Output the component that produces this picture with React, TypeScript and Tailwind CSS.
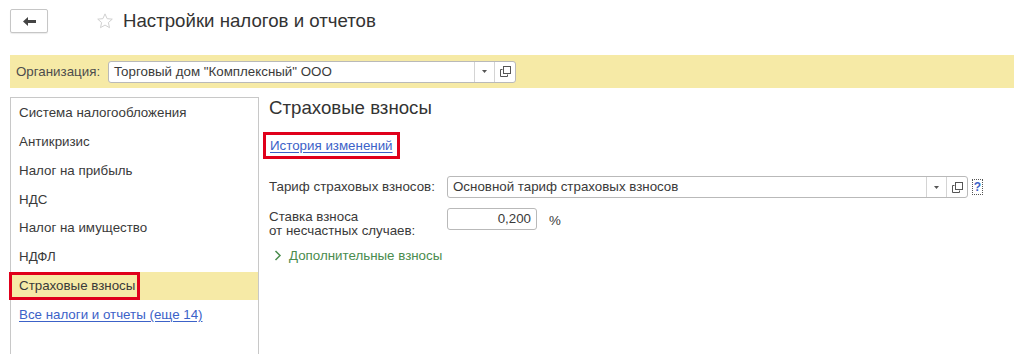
import React from 'react';

const menuItems = [
   'Система налогообложения',
   'Антикризис',
   'Налог на прибыль',
   'НДС',
   'Налог на имущество',
   'НДФЛ',
];

// Small "open" icon used on the right of select fields
const OpenIcon = () => (
   <svg width="11" height="11" viewBox="0 0 11 11" fill="none">
      <rect x="3.5" y="0.5" width="7" height="7" fill="white" stroke="#555" strokeWidth="1" />
      <path d="M0.5 3.5 V10.5 H7.5 V8.5 M0.5 3.5 H2.5" stroke="#555" strokeWidth="1" />
   </svg>
);

const SelectField: React.FC<{ value: string; className: string }> = ({ value, className }) => (
   <div className={`flex h-[22px] items-stretch rounded-[3px] border border-[#b9b9b9] bg-white ${className}`}>
      <div className="flex flex-1 items-center pl-[5px] text-[13.33px] text-[#3a3a3a]">{value}</div>
      <div className="flex w-[20px] items-center justify-center border-l border-[#d4d4d4]">
         <svg width="5" height="3" viewBox="0 0 5 3">
            <path d="M0 0 H5 L2.5 3 Z" fill="#555" />
         </svg>
      </div>
      <div className="flex w-[21px] items-center justify-center border-l border-[#d4d4d4]">
         <OpenIcon />
      </div>
   </div>
);

export default function App() {
   return (
      <div className="relative h-[354px] w-[1024px] overflow-hidden bg-white font-['Liberation_Sans',Arial,sans-serif] text-[#3a3a3a]">
         {/* Header */}
         <div className="flex h-[43px] items-start pl-[10px] pt-[9px]">
            <button className="flex h-[24px] w-[38px] items-center justify-center rounded-[2px] border border-[#c6c6c6] bg-white shadow-[0_1px_1px_rgba(0,0,0,0.08)]">
               <svg width="13" height="9" viewBox="0 0 13 9">
                  <path d="M0 4.5 L5 0 V3 H13 V6 H5 V9 Z" fill="#444" />
               </svg>
            </button>
            <svg className="ml-[48px] mt-[3px]" width="18" height="18" viewBox="0 0 24 24" fill="none">
               <path
                  d="M12 2.5 L14.8 8.9 L21.7 9.5 L16.5 14.1 L18 20.9 L12 17.4 L6 20.9 L7.5 14.1 L2.3 9.5 L9.2 8.9 Z"
                  stroke="#cfcfcf"
                  strokeWidth="1.3"
                  strokeLinejoin="round"
               />
            </svg>
            <h1 className="ml-[9px] text-[18.67px] leading-[24px] text-[#333]">Настройки налогов и отчетов</h1>
         </div>

         {/* Organization bar */}
         <div className="mx-[10px] mt-[12px] flex h-[33px] items-center bg-[#f6eaa6] pl-[6px]">
            <span className="w-[92px] text-[13.33px] text-[#4d4d4d]">Организация:</span>
            <SelectField value={'Торговый дом "Комплексный" ООО'} className="w-[408px]" />
         </div>

         {/* Main */}
         <div className="mt-[9px] flex">
            <div className="ml-[10px] h-[300px] w-[249px] border border-[#c8c8c8] pt-px">
               {menuItems.map((item) => (
                  <div key={item} className="flex h-[28.75px] items-center pl-[8px] text-[13.33px]">
                     {item}
                  </div>
               ))}
               <div className="relative flex h-[28.75px] items-center bg-[#f6eaa6] pl-[8px] text-[13.33px]">
                  Страховые взносы
                  <div className="absolute left-[-2px] top-0 h-[28px] w-[131px] border-[3px] border-[#e0001b]" />
               </div>
               <div className="flex h-[28.75px] items-center pl-[8px] text-[13.33px]">
                  <a className="text-[#3c62c8] underline underline-offset-2">Все налоги и отчеты (еще 14)</a>
               </div>
            </div>

            <div className="ml-[10px] flex-1">
               <h2 className="text-[18.67px] leading-[22px] text-[#333]">Страховые взносы</h2>
               <div className="ml-[-6px] mt-[13px] inline-block border-[3px] border-[#e0001b] px-[4px] text-[13.33px] leading-[21px]">
                  <a className="text-[#3c62c8] underline underline-offset-2">История изменений</a>
               </div>

               <div className="mt-[17px] flex items-center">
                  <span className="w-[178px] text-[13.33px]">Тариф страховых взносов:</span>
                  <SelectField value="Основной тариф страховых взносов" className="w-[521px]" />
                  <span className="ml-[4px] flex h-[16px] w-[11px] items-center justify-center border border-dotted border-[#555] text-[12px] font-bold leading-none text-[#3c62c8]">
                     ?
                  </span>
               </div>

               <div className="mt-[10px] flex items-start">
                  <div className="mt-[2px] w-[178px] text-[13.33px] leading-[14px]">
                     Ставка взноса
                     <br />
                     от несчастных случаев:
                  </div>
                  <div className="flex h-[22px] w-[90px] items-center justify-end rounded-[3px] border border-[#b9b9b9] pr-[5px] text-[13.33px]">
                     0,200
                  </div>
                  <span className="ml-[12px] mt-[3px] text-[13.33px]">%</span>
               </div>

               <div className="mt-[8px] flex items-center pl-[5px] text-[13.33px] text-[#4a8c4e]">
                  <svg width="8" height="11" viewBox="0 0 8 11" fill="none">
                     <path d="M1.5 1 L6 5.5 L1.5 10" stroke="#4a8c4e" strokeWidth="1.5" />
                  </svg>
                  <span className="ml-[7px]">Дополнительные взносы</span>
               </div>
            </div>
         </div>
      </div>
   );
}
